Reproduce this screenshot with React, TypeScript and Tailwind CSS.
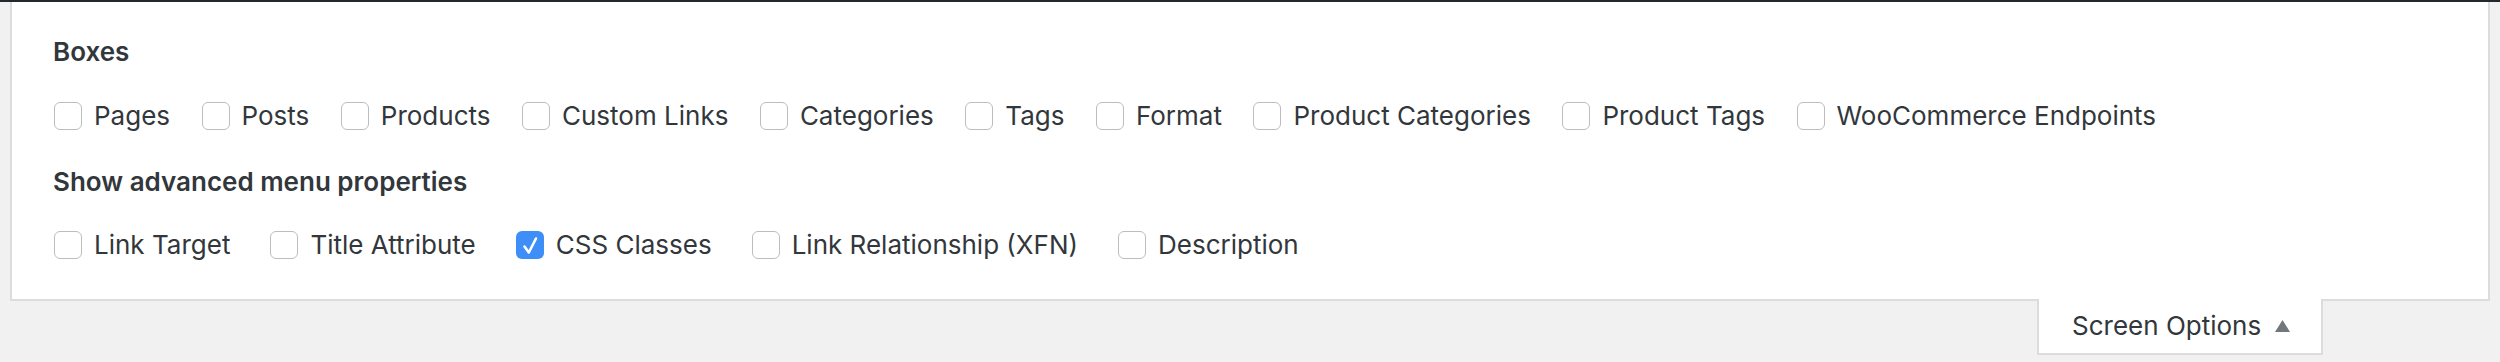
import React from "react";

const font = { fontFamily: "Inter, Roboto, 'Noto Sans', 'Liberation Sans', sans-serif" };

function Box({ checked }: { checked?: boolean }) {
  if (checked) {
    return (
      <span className="w-[28px] h-[28px] rounded-[6px] bg-[#3d8ef7] flex items-center justify-center shrink-0">
        <svg width="28" height="28" viewBox="0 0 28 28">
          <path d="M8.5 15.5 L12.8 21.5 L20 7.5" fill="none" stroke="#fff" strokeWidth="2.6" strokeLinecap="round" strokeLinejoin="round" />
        </svg>
      </span>
    );
  }
  return <span className="w-[28px] h-[28px] rounded-[6px] border-[1.5px] border-[#bdbdbd] bg-white shrink-0" />;
}

function Item({ label, checked }: { label: string; checked?: boolean }) {
  return (
    <label className="flex items-center gap-[12px] h-[36px]">
      <Box checked={checked} />
      <span className="text-[26px] leading-[36px] text-[#32373c]">{label}</span>
    </label>
  );
}

export default function App() {
  const boxes = [
    "Pages",
    "Posts",
    "Products",
    "Custom Links",
    "Categories",
    "Tags",
    "Format",
    "Product Categories",
    "Product Tags",
    "WooCommerce Endpoints",
  ];
  return (
    <div className="w-[2500px] h-[362px] bg-[#f1f1f1] overflow-hidden" style={font}>
      <div className="h-[2px] bg-[#23282d]" />
      <div className="px-[10px]">
        <div className="bg-white border-x-2 border-b-2 border-[#dcdcdc] pl-[41px] pt-[32px] pb-[36px] h-[299px]">
          <div className="text-[26px] leading-[36px] font-semibold text-[#32373c]">Boxes</div>
          <div className="flex items-center gap-[31.5px] mt-[28px] pl-[1px]">
            {boxes.map((b) => (
              <Item key={b} label={b} />
            ))}
          </div>
          <div className="text-[26px] leading-[36px] font-semibold text-[#32373c] mt-[30px]">
            Show advanced menu properties
          </div>
          <div className="flex items-center gap-[40px] mt-[27px] pl-[1px]">
            <Item label="Link Target" />
            <Item label="Title Attribute" />
            <Item label="CSS Classes" checked />
            <Item label="Link Relationship (XFN)" />
            <Item label="Description" />
          </div>
        </div>
        <div className="flex justify-end pr-[167px]">
          <div className="w-[286px] h-[56px] bg-white border-x-2 border-b-2 border-[#dcdcdc] -mt-[2px] flex items-center pl-[33px] gap-[14px]">
            <span className="text-[26px] leading-[36px] text-[#32373c]">Screen Options</span>
            <svg width="15" height="12" viewBox="0 0 15 12">
              <polygon points="7.5,0 15,12 0,12" fill="#72777c" />
            </svg>
          </div>
        </div>
      </div>
    </div>
  );
}
